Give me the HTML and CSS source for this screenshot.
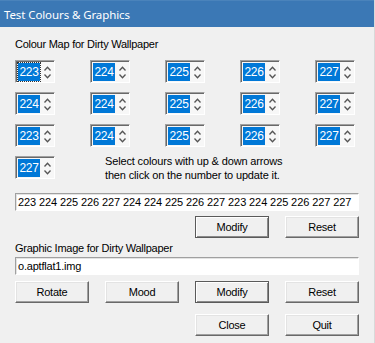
FILE: index.html
```html
<!DOCTYPE html>
<html lang="en">
<head>
    <meta charset="UTF-8">
    <meta name="viewport" content="width=device-width, initial-scale=1.0">
    <title>Test Colours &amp; Graphics</title>
    <link rel="stylesheet" href="styles.css">
</head>
<body>
    <div class="window">
        <div class="titlebar">Test Colours &amp; Graphics</div>
        <div class="content">
            <div class="caption">Colour Map for Dirty Wallpaper</div>
            <div class="spin-grid">
                <div class="spin"><span class="spin-val focus">223</span><span class="arrows"><svg width="7" height="5" viewBox="0 0 7 5"><path d="M0.5 4.5L3.5 1.2L6.5 4.5" /></svg><svg width="7" height="5" viewBox="0 0 7 5"><path d="M0.5 0.5L3.5 3.8L6.5 0.5" /></svg></span></div>
                <div class="spin"><span class="spin-val">224</span><span class="arrows"><svg width="7" height="5" viewBox="0 0 7 5"><path d="M0.5 4.5L3.5 1.2L6.5 4.5" /></svg><svg width="7" height="5" viewBox="0 0 7 5"><path d="M0.5 0.5L3.5 3.8L6.5 0.5" /></svg></span></div>
                <div class="spin"><span class="spin-val">225</span><span class="arrows"><svg width="7" height="5" viewBox="0 0 7 5"><path d="M0.5 4.5L3.5 1.2L6.5 4.5" /></svg><svg width="7" height="5" viewBox="0 0 7 5"><path d="M0.5 0.5L3.5 3.8L6.5 0.5" /></svg></span></div>
                <div class="spin"><span class="spin-val">226</span><span class="arrows"><svg width="7" height="5" viewBox="0 0 7 5"><path d="M0.5 4.5L3.5 1.2L6.5 4.5" /></svg><svg width="7" height="5" viewBox="0 0 7 5"><path d="M0.5 0.5L3.5 3.8L6.5 0.5" /></svg></span></div>
                <div class="spin"><span class="spin-val">227</span><span class="arrows"><svg width="7" height="5" viewBox="0 0 7 5"><path d="M0.5 4.5L3.5 1.2L6.5 4.5" /></svg><svg width="7" height="5" viewBox="0 0 7 5"><path d="M0.5 0.5L3.5 3.8L6.5 0.5" /></svg></span></div>

                <div class="spin"><span class="spin-val">224</span><span class="arrows"><svg width="7" height="5" viewBox="0 0 7 5"><path d="M0.5 4.5L3.5 1.2L6.5 4.5" /></svg><svg width="7" height="5" viewBox="0 0 7 5"><path d="M0.5 0.5L3.5 3.8L6.5 0.5" /></svg></span></div>
                <div class="spin"><span class="spin-val">224</span><span class="arrows"><svg width="7" height="5" viewBox="0 0 7 5"><path d="M0.5 4.5L3.5 1.2L6.5 4.5" /></svg><svg width="7" height="5" viewBox="0 0 7 5"><path d="M0.5 0.5L3.5 3.8L6.5 0.5" /></svg></span></div>
                <div class="spin"><span class="spin-val">225</span><span class="arrows"><svg width="7" height="5" viewBox="0 0 7 5"><path d="M0.5 4.5L3.5 1.2L6.5 4.5" /></svg><svg width="7" height="5" viewBox="0 0 7 5"><path d="M0.5 0.5L3.5 3.8L6.5 0.5" /></svg></span></div>
                <div class="spin"><span class="spin-val">226</span><span class="arrows"><svg width="7" height="5" viewBox="0 0 7 5"><path d="M0.5 4.5L3.5 1.2L6.5 4.5" /></svg><svg width="7" height="5" viewBox="0 0 7 5"><path d="M0.5 0.5L3.5 3.8L6.5 0.5" /></svg></span></div>
                <div class="spin"><span class="spin-val">227</span><span class="arrows"><svg width="7" height="5" viewBox="0 0 7 5"><path d="M0.5 4.5L3.5 1.2L6.5 4.5" /></svg><svg width="7" height="5" viewBox="0 0 7 5"><path d="M0.5 0.5L3.5 3.8L6.5 0.5" /></svg></span></div>

                <div class="spin"><span class="spin-val">223</span><span class="arrows"><svg width="7" height="5" viewBox="0 0 7 5"><path d="M0.5 4.5L3.5 1.2L6.5 4.5" /></svg><svg width="7" height="5" viewBox="0 0 7 5"><path d="M0.5 0.5L3.5 3.8L6.5 0.5" /></svg></span></div>
                <div class="spin"><span class="spin-val">224</span><span class="arrows"><svg width="7" height="5" viewBox="0 0 7 5"><path d="M0.5 4.5L3.5 1.2L6.5 4.5" /></svg><svg width="7" height="5" viewBox="0 0 7 5"><path d="M0.5 0.5L3.5 3.8L6.5 0.5" /></svg></span></div>
                <div class="spin"><span class="spin-val">225</span><span class="arrows"><svg width="7" height="5" viewBox="0 0 7 5"><path d="M0.5 4.5L3.5 1.2L6.5 4.5" /></svg><svg width="7" height="5" viewBox="0 0 7 5"><path d="M0.5 0.5L3.5 3.8L6.5 0.5" /></svg></span></div>
                <div class="spin"><span class="spin-val">226</span><span class="arrows"><svg width="7" height="5" viewBox="0 0 7 5"><path d="M0.5 4.5L3.5 1.2L6.5 4.5" /></svg><svg width="7" height="5" viewBox="0 0 7 5"><path d="M0.5 0.5L3.5 3.8L6.5 0.5" /></svg></span></div>
                <div class="spin"><span class="spin-val">227</span><span class="arrows"><svg width="7" height="5" viewBox="0 0 7 5"><path d="M0.5 4.5L3.5 1.2L6.5 4.5" /></svg><svg width="7" height="5" viewBox="0 0 7 5"><path d="M0.5 0.5L3.5 3.8L6.5 0.5" /></svg></span></div>

                <div class="spin"><span class="spin-val">227</span><span class="arrows"><svg width="7" height="5" viewBox="0 0 7 5"><path d="M0.5 4.5L3.5 1.2L6.5 4.5" /></svg><svg width="7" height="5" viewBox="0 0 7 5"><path d="M0.5 0.5L3.5 3.8L6.5 0.5" /></svg></span></div>
                <div class="note">Select colours with up &amp; down arrows<br>then click on the number to update it.</div>
            </div>

            <div class="field map-field">223 224 225 226 227 224 224 225 226 227 223 224 225 226 227 227</div>
            <div class="btn-row">
                <button class="btn default">Modify</button>
                <button class="btn">Reset</button>
            </div>

            <div class="caption second">Graphic Image for Dirty Wallpaper</div>
            <div class="field image-field">o.aptflat1.img</div>
            <div class="btn-row spread">
                <button class="btn">Rotate</button>
                <button class="btn">Mood</button>
                <button class="btn default">Modify</button>
                <button class="btn">Reset</button>
            </div>
            <div class="btn-row last">
                <button class="btn">Close</button>
                <button class="btn">Quit</button>
            </div>
        </div>
    </div>
</body>
</html>
```

FILE: styles.css
```css
* {
    box-sizing: border-box;
}
body {
    margin: 0;
    background: #f0f0f0;
    font-family: "Liberation Sans", Arial, sans-serif;
    font-size: 11px;
    color: #000;
}
.window {
    width: 375px;
    height: 343px;
    background: #f0f0f0;
    border-right: 1px solid #d9d9d9;
}
.titlebar {
    height: 27px;
    display: flex;
    align-items: center;
    padding-left: 4px;
    background: #3b78b5;
    border-top: 1px solid #4a83bb;
    color: #fff;
    font-family: "Noto Sans", "Open Sans", sans-serif;
    font-size: 11.5px;
    letter-spacing: -0.1px;
}
.content {
    padding: 11px 15px 0 15px;
}
.caption {
    line-height: 13px;
    letter-spacing: -0.25px;
}
.caption.second {
    margin-top: 4px;
}

/* spinner grid */
.spin-grid {
    margin-top: 9px;
    display: grid;
    grid-template-columns: repeat(5, 40px);
    column-gap: 35px;
    row-gap: 9px;
}
.spin {
    height: 23px;
    display: flex;
    border: 1px solid;
    border-color: #a0a0a0 #fff #fff #a0a0a0;
    box-shadow: inset 1px 1px #696969;
    background: #f7f7f7;
    padding: 2px 0 1px 2px;
}
.spin-val {
    width: 22px;
    display: flex;
    align-items: center;
    justify-content: center;
    background: #0078d7;
    color: #fff;
    font-size: 12px;
    letter-spacing: -0.3px;
}
.spin-val.focus {
    outline: 1px dotted #333;
    outline-offset: 0;
}
.arrows {
    flex: 1;
    display: flex;
    flex-direction: column;
    align-items: center;
    justify-content: center;
    gap: 3px;
}
.arrows svg {
    display: block;
}
.arrows path {
    fill: none;
    stroke: #555;
    stroke-width: 1.3;
}
.note {
    grid-column: 2 / span 4;
    margin: -2px 0 0 15px;
    line-height: 14px;
    letter-spacing: -0.15px;
}

/* text fields */
.field {
    height: 18px;
    background: #fff;
    border: 1px solid;
    border-color: #a0a0a0 #fff #fff #a0a0a0;
    box-shadow: inset 1px 1px #e3e3e3;
    padding-left: 2px;
    line-height: 16px;
    white-space: nowrap;
    overflow: hidden;
}
.map-field {
    margin-top: 11px;
    letter-spacing: -0.1px;
}
.image-field {
    margin-top: 2px;
    letter-spacing: -0.2px;
}

/* buttons */
.btn-row {
    display: flex;
    justify-content: flex-end;
    gap: 16px;
    margin-top: 5px;
}
.btn-row.spread {
    margin-top: 6px;
}
.btn-row.last {
    margin-top: 11px;
}
.btn {
    width: 74px;
    height: 22px;
    padding: 0;
    font-family: inherit;
    font-size: 11px;
    font-weight: normal;
    letter-spacing: -0.25px;
    color: #000;
    background: #f0f0f0;
    border: 1px solid;
    border-color: #fff #696969 #696969 #fff;
    box-shadow: inset -1px -1px #a0a0a0, inset 1px 1px #e3e3e3;
}
.btn.default {
    border-color: #5a5a5a;
    box-shadow: inset 1px 1px #fff, inset -1px -1px #8a8a8a;
}
```
